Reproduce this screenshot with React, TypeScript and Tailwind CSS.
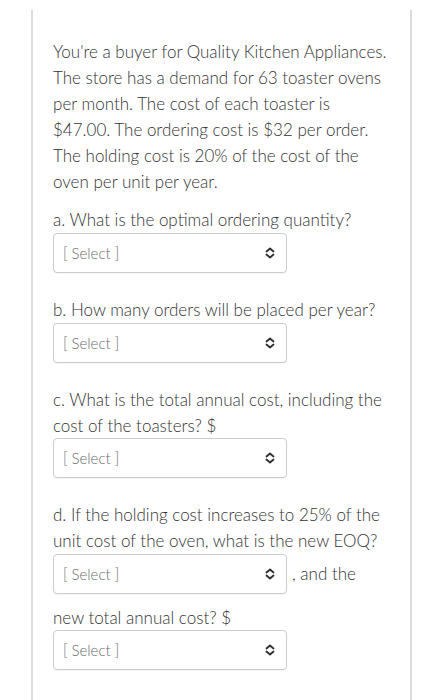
import React from "react";

function ChevronUpDown() {
  return (
    <svg width="10" height="12" viewBox="0 0 10 12" fill="none" stroke="#2d2d2d" strokeWidth="1.8" strokeLinecap="round" strokeLinejoin="round">
      <path d="M1.5 4.5 L5 1.5 L8.5 4.5" />
      <path d="M1.5 7.5 L5 10.5 L8.5 7.5" />
    </svg>
  );
}

function SelectBox() {
  return (
    <div className="w-[234px] h-[40px] shrink-0 border border-[#c7cdd1] rounded-[4px] bg-white flex items-center justify-between pl-[9px] pr-[11px] shadow-[0_1px_1px_rgba(0,0,0,0.04)]">
      <span className="text-[15px] text-[#6b6b6b]">[ Select ]</span>
      <ChevronUpDown />
    </div>
  );
}

export default function App() {
  return (
    <div className="min-h-[700px] bg-white pt-[10px]" style={{ fontFamily: "Lato, 'Open Sans', sans-serif" }}>
      <div className="ml-[31px] w-[381px] min-h-[690px] border-l-2 border-r-2 border-[#dcdcdc] pl-[20px] pr-[22px] pt-[29px] text-[17px] leading-[26px] font-light text-[#333333]">
        <p>
          You're a buyer for Quality Kitchen Appliances. The store has a demand for 63 toaster ovens per month. The cost of each toaster is $47.00. The ordering cost is $32 per order. The holding cost is 20% of the cost of the oven per unit per year.
        </p>

        <p className="mt-[12px]">a. What is the optimal ordering quantity?</p>
        <SelectBox />

        <p className="mt-[24px]">b. How many orders will be placed per year?</p>
        <SelectBox />

        <p className="mt-[24px]">c. What is the total annual cost, including the cost of the toasters? $</p>
        <div className="-mt-[1px]">
          <SelectBox />
        </div>

        <p className="mt-[24px]">d. If the holding cost increases to 25% of the unit cost of the oven, what is the new EOQ?</p>
        <div className="flex items-center gap-[5px]">
          <SelectBox />
          <span className="whitespace-nowrap">, and the</span>
        </div>

        <p className="mt-[11px]">new total annual cost? $</p>
        <div className="-mt-[1px]">
          <SelectBox />
        </div>
      </div>
    </div>
  );
}
